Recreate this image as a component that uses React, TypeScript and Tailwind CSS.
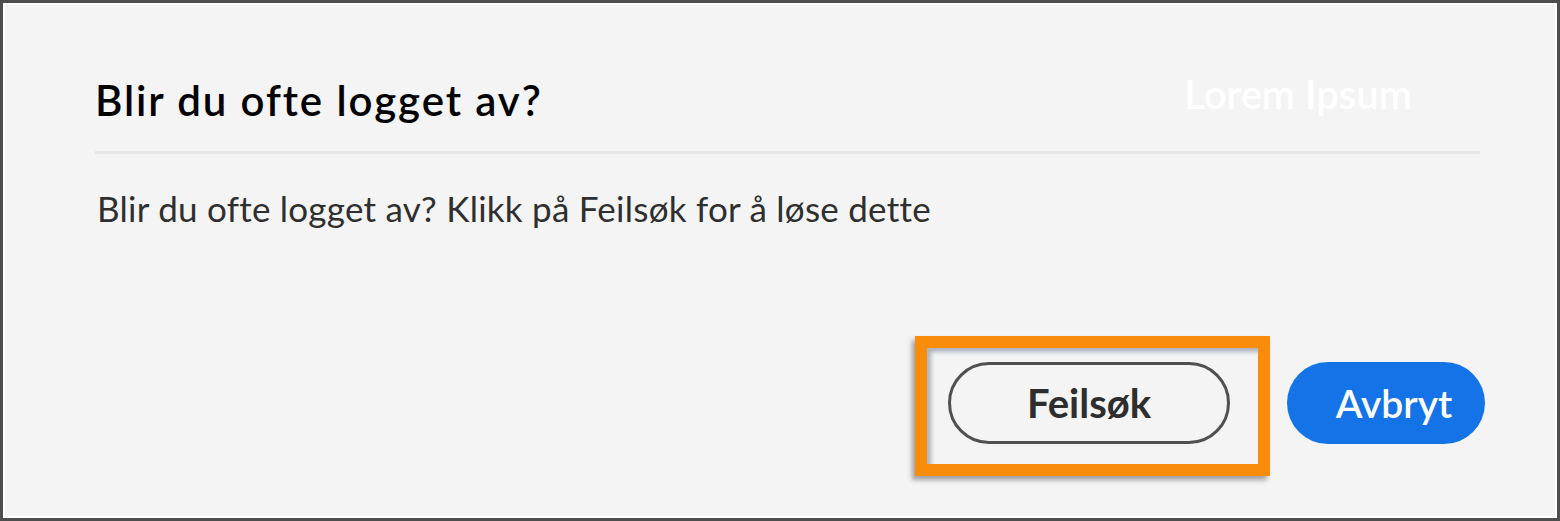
export default function App() {
  return (
    <div className="w-[1560px] h-[521px] bg-[#f4f4f4] border-[3px] border-[#4d4d4d]">
      <div className="relative w-full h-full border-2 border-white" style={{ fontFamily: 'Lato, "Open Sans", sans-serif' }}>
        <div className="pl-[90px] pr-[75px]">
          <div className="flex items-center justify-between h-[146px] pt-[44px]">
            <h1 className="text-[42px] font-semibold text-black tracking-[1.9px] leading-none">Blir du ofte logget av?</h1>
            <span className="mr-[68px] text-[40px] font-semibold text-white leading-none -translate-y-[6px]">Lorem Ipsum</span>
          </div>
          <div className="h-[3px] bg-[#e6e6e6]" />
          <p className="mt-[37px] ml-[2px] text-[35px] text-[#2f2f2f] leading-none tracking-[0.25px]">
            Blir du ofte logget av? Klikk på Feilsøk for å løse dette
          </p>
        </div>
        <div className="absolute left-0 right-0 top-[357px] flex justify-end gap-[57px] pr-[70px]">
          <button className="w-[282px] h-[82px] rounded-full border-[3px] border-[#505050] text-[40px] font-bold text-[#2e2e2e]">
            Feilsøk
          </button>
          <button className="w-[198px] h-[82px] pl-[16px] rounded-full bg-[#1473e6] text-[39px] font-semibold text-white">
            Avbryt
          </button>
        </div>
        {/* annotation frame round the Feilsøk button */}
        <div className="absolute left-[910px] top-[331px] w-[355px] h-[140px] border-[12px] border-[#fa8c0b] shadow-[-3px_4px_5px_rgba(0,0,0,0.35)]">
          <div className="w-full h-full shadow-[inset_4px_4px_4px_rgba(80,100,120,0.45)]" />
        </div>
      </div>
    </div>
  )
}
